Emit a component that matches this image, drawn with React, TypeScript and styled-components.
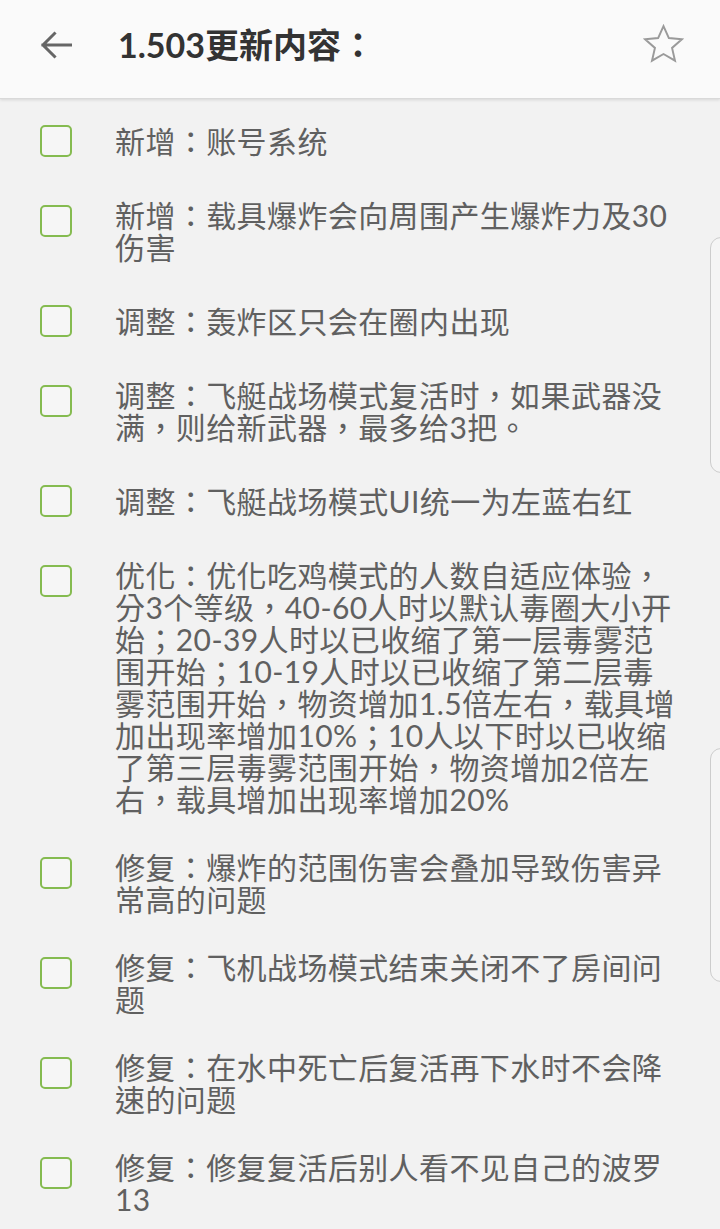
import React from "react";
import styled, { createGlobalStyle } from "styled-components";

const Global = createGlobalStyle`
  html, body { margin: 0; padding: 0; overflow: hidden; background: #f2f2f2; }
  * { box-sizing: border-box; }
`;

const Page = styled.div`
  position: relative;
  width: 720px;
  min-height: 1229px;
  background: #f2f2f2;
  font-family: Lato, "Noto Sans CJK TC", "Noto Sans CJK SC", sans-serif;
  overflow: hidden;
`;

const Header = styled.header`
  height: 99px;
  background: #fafafa;
  border-bottom: 1px solid #d9d9d9;
  box-shadow: 0 1px 3px rgba(0, 0, 0, 0.12);
  display: flex;
  align-items: center;
  padding: 0 40px 9px 40px;
`;

const BackButton = styled.div`
  width: 32px;
  height: 28px;
  display: flex;
  align-items: center;
  justify-content: center;
`;

const Title = styled.h1`
  margin: 0 0 0 46px;
  flex: 1;
  font-size: 34px;
  font-weight: 700;
  color: #333333;
  line-height: 40px;
  white-space: nowrap;
`;

const StarButton = styled.div`
  width: 47px;
  height: 47px;
  margin-right: -7px;
  display: flex;
  align-items: center;
  justify-content: center;
`;

const List = styled.ul`
  list-style: none;
  margin: 0;
  padding: 2px 0 0 0;
`;

const Row = styled.li`
  display: flex;
  align-items: center;
  min-height: 80px;
  padding: 18px 0 18px 40px;
  gap: 43px;
`;

const Check = styled.span`
  align-self: flex-start;
  flex: none;
  width: 32px;
  height: 32px;
  margin-top: 6px;
  border: 2.5px solid #85bb50;
  border-radius: 5px;
  background: #f6f6f6;
`;

const Text = styled.div`
  font-size: 30px;
  line-height: 32px;
  letter-spacing: 0.4px;
  color: #606060;
`;

const Line = styled.span`
  display: block;
  white-space: nowrap;
`;

const EdgeHandle = styled.div<{ $top: number; $height: number }>`
  position: absolute;
  right: -14px;
  top: ${(p) => p.$top}px;
  height: ${(p) => p.$height}px;
  width: 24px;
  border: 1px solid #cdcdcd;
  border-radius: 11px;
  background: #f5f5f5;
`;

const items: string[][] = [
  ["新增：账号系统"],
  ["新增：载具爆炸会向周围产生爆炸力及30", "伤害"],
  ["调整：轰炸区只会在圈内出现"],
  ["调整：飞艇战场模式复活时，如果武器没", "满，则给新武器，最多给3把。"],
  ["调整：飞艇战场模式UI统一为左蓝右红"],
  [
    "优化：优化吃鸡模式的人数自适应体验，",
    "分3个等级，40-60人时以默认毒圈大小开",
    "始；20-39人时以已收缩了第一层毒雾范",
    "围开始；10-19人时以已收缩了第二层毒",
    "雾范围开始，物资增加1.5倍左右，载具增",
    "加出现率增加10%；10人以下时以已收缩",
    "了第三层毒雾范围开始，物资增加2倍左",
    "右，载具增加出现率增加20%",
  ],
  ["修复：爆炸的范围伤害会叠加导致伤害异", "常高的问题"],
  ["修复：飞机战场模式结束关闭不了房间问", "题"],
  ["修复：在水中死亡后复活再下水时不会降", "速的问题"],
  ["修复：修复复活后别人看不见自己的波罗", "13"],
];

export default function App() {
  return (
    <Page>
      <Global />
      <Header>
        <BackButton>
          <svg width="32" height="28" viewBox="0 0 32 28" fill="none">
            <path
              d="M31 14H3M14.5 2.5L3 14l11.5 11.5"
              stroke="#666"
              strokeWidth="3"
              strokeLinecap="square"
              strokeLinejoin="miter"
            />
          </svg>
        </BackButton>
        <Title>1.503更新内容：</Title>
        <StarButton>
          <svg width="47" height="47" viewBox="0 0 24 24" fill="none">
            <path
              d="M12 2.6l2.75 6.1 6.65.62-5.03 4.42 1.5 6.52L12 16.86l-5.87 3.4 1.5-6.52L2.6 9.32l6.65-.62z"
              stroke="#9a9a9a"
              strokeWidth="1"
              strokeLinejoin="miter"
            />
          </svg>
        </StarButton>
      </Header>
      <List>
        {items.map((lines, i) => (
          <Row key={i}>
            <Check />
            <Text>
              {lines.map((l, j) => (
                <Line key={j}>{l}</Line>
              ))}
            </Text>
          </Row>
        ))}
      </List>
      <EdgeHandle $top={237} $height={236} />
      <EdgeHandle $top={748} $height={234} />
    </Page>
  );
}
